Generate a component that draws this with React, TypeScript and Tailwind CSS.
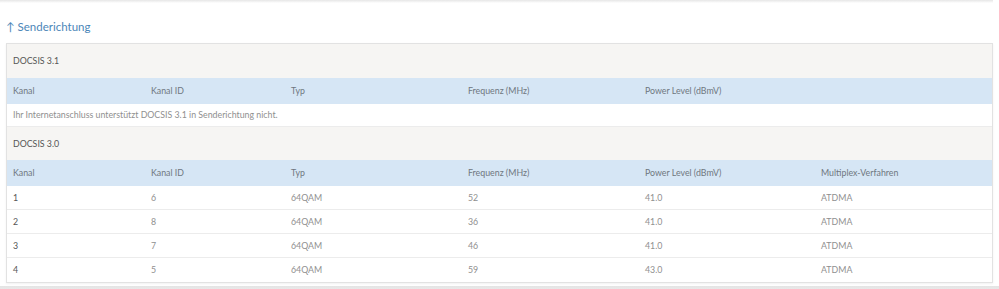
const cols = "grid grid-cols-[138px_140px_177px_177px_176px_1fr]";

const rows = [
  ["1", "6", "64QAM", "52", "41.0", "ATDMA"],
  ["2", "8", "64QAM", "36", "41.0", "ATDMA"],
  ["3", "7", "64QAM", "46", "41.0", "ATDMA"],
  ["4", "5", "64QAM", "59", "43.0", "ATDMA"],
];

function HeaderRow({ multiplex }: { multiplex?: boolean }) {
  return (
    <div className={`${cols} h-[26px] items-center bg-[#d6e6f5] text-[#6f7780]`}>
      <div className="px-[6px]">Kanal</div>
      <div className="px-[6px]">Kanal ID</div>
      <div className="px-[6px]">Typ</div>
      <div className="px-[6px]">Frequenz (MHz)</div>
      <div className="px-[6px]">Power Level (dBmV)</div>
      <div className="px-[6px]">{multiplex ? "Multiplex-Verfahren" : ""}</div>
    </div>
  );
}

export default function App() {
  return (
    <div className="w-[999px] h-[289px] bg-white overflow-hidden text-[8.8px] font-['Lato','Open_Sans',sans-serif]">
      <div className="h-[3px] mr-[6px] bg-gradient-to-b from-[#e6e6e6] to-white" />
      <h2 className="mt-[13px] ml-[6px] h-[27px] text-[11.5px] text-[#4c86b8] leading-[22px]">
        ↑ Senderichtung
      </h2>
      <div className="ml-[6px] mr-[6px] border border-[#e2e2e2] shadow-[0_1px_2px_rgba(0,0,0,0.06)]">
        <div className="h-[34px] flex items-center px-[6px] bg-[#f6f5f3] text-[#555]">
          DOCSIS 3.1
        </div>
        <HeaderRow />
        <div className="h-[23px] flex items-center px-[6px] text-[#8f8f8f] border-b border-[#ececec]">
          Ihr Internetanschluss unterstützt DOCSIS 3.1 in Senderichtung nicht.
        </div>
        <div className="h-[33px] flex items-center px-[6px] bg-[#f6f5f3] text-[#555]">
          DOCSIS 3.0
        </div>
        <HeaderRow multiplex />
        {rows.map((r, i) => (
          <div
            key={i}
            className={`${cols} h-[24px] items-center text-[#8f8f8f] ${i < rows.length - 1 ? "border-b border-[#ececec]" : ""}`}
          >
            {r.map((c, j) => (
              <div key={j} className={`px-[6px] ${j === 0 ? "text-[#555]" : ""}`}>
                {c}
              </div>
            ))}
          </div>
        ))}
      </div>
      <div className="mt-[3px] h-[10px] bg-gradient-to-b from-[#e4e4e4] to-[#f2f2f2]" />
    </div>
  );
}
